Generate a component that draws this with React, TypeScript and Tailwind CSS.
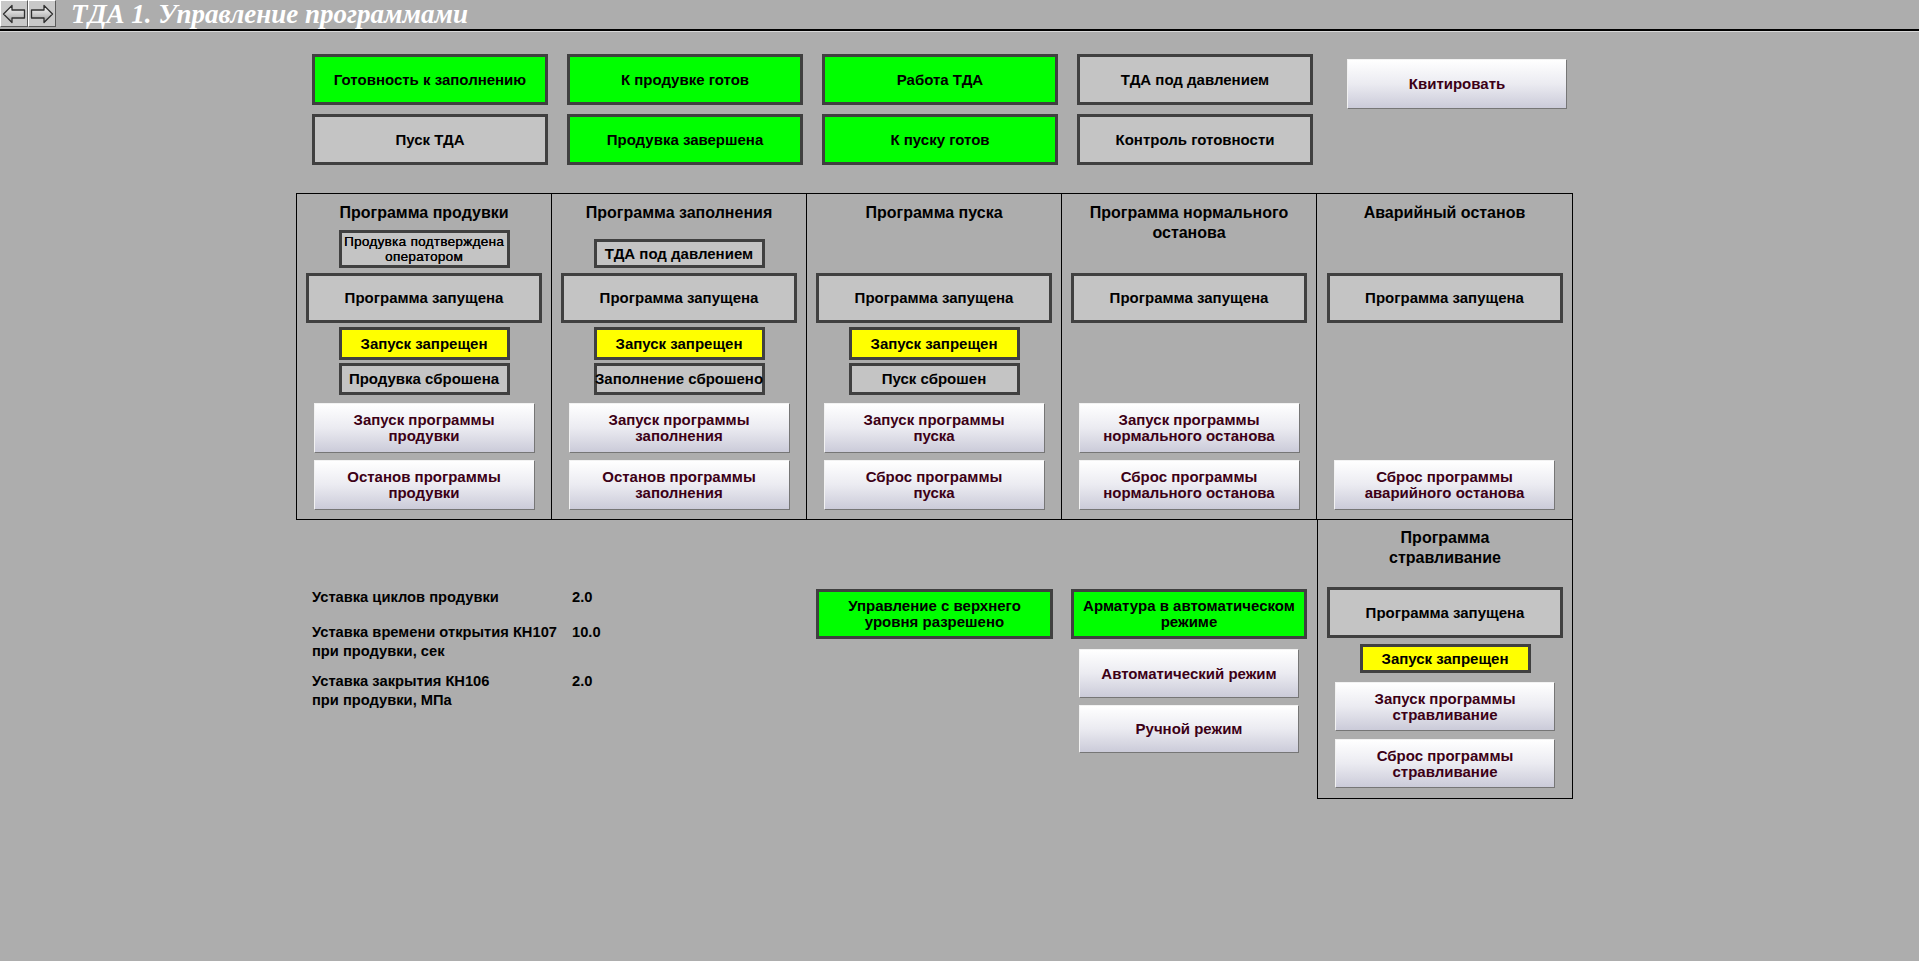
import type { ReactNode } from "react";

// Types
type Tone = "green" | "gray" | "yellow";

interface ProgramColumn {
  title: string[];
  note?: { text: string[]; small?: boolean; height: string };
  lamps?: { tone: Tone; text: string }[];
  buttons: (string[] | null)[];
}

const toneClass: Record<Tone, string> = {
  green: "bg-[#00ff00]",
  gray: "bg-[#c4c4c4]",
  yellow: "bg-[#ffff00]",
};

const topLamps: { tone: Tone; text: string }[] = [
  { tone: "green", text: "Готовность к заполнению" },
  { tone: "green", text: "К продувке готов" },
  { tone: "green", text: "Работа ТДА" },
  { tone: "gray", text: "ТДА под давлением" },
  { tone: "gray", text: "Пуск ТДА" },
  { tone: "green", text: "Продувка завершена" },
  { tone: "green", text: "К пуску готов" },
  { tone: "gray", text: "Контроль готовности" },
];

const columns: ProgramColumn[] = [
  {
    title: ["Программа продувки"],
    note: { text: ["Продувка подтверждена", "оператором"], small: true, height: "h-[38px]" },
    lamps: [
      { tone: "yellow", text: "Запуск запрещен" },
      { tone: "gray", text: "Продувка сброшена" },
    ],
    buttons: [
      ["Запуск программы", "продувки"],
      ["Останов программы", "продувки"],
    ],
  },
  {
    title: ["Программа заполнения"],
    note: { text: ["ТДА под давлением"], height: "h-[29px]" },
    lamps: [
      { tone: "yellow", text: "Запуск запрещен" },
      { tone: "gray", text: "Заполнение сброшено" },
    ],
    buttons: [
      ["Запуск программы", "заполнения"],
      ["Останов программы", "заполнения"],
    ],
  },
  {
    title: ["Программа пуска"],
    lamps: [
      { tone: "yellow", text: "Запуск запрещен" },
      { tone: "gray", text: "Пуск сброшен" },
    ],
    buttons: [
      ["Запуск программы", "пуска"],
      ["Сброс программы", "пуска"],
    ],
  },
  {
    title: ["Программа нормального", "останова"],
    buttons: [
      ["Запуск программы", "нормального останова"],
      ["Сброс программы", "нормального останова"],
    ],
  },
  {
    title: ["Аварийный останов"],
    buttons: [null, ["Сброс программы", "аварийного останова"]],
  },
];

const setpoints = [
  { label: ["Уставка циклов продувки"], value: "2.0", gap: "" },
  { label: ["Уставка времени открытия КН107", "при продувки, сек"], value: "10.0", gap: "mt-[16px]" },
  { label: ["Уставка закрытия КН106", "при продувки, МПа"], value: "2.0", gap: "mt-[11px]" },
];

function Lines({ lines }: { lines: string[] }) {
  return (
    <span>
      {lines.map((l, i) => (
        <span key={i} className="block">
          {l}
        </span>
      ))}
    </span>
  );
}

function Lamp({ tone, className = "", children }: { tone: Tone; className?: string; children: ReactNode }) {
  return (
    <div
      className={`flex items-center justify-center text-center whitespace-nowrap border-[3px] border-[#404040] text-black font-bold text-[15px] leading-[16px] ${toneClass[tone]} ${className}`}
    >
      {children}
    </div>
  );
}

function PanelButton({ className = "", children }: { className?: string; children: ReactNode }) {
  return (
    <button
      className={`flex items-center justify-center text-center whitespace-nowrap border border-t-[#f2f2f2] border-l-[#f2f2f2] border-r-[#767676] border-b-[#767676] bg-linear-to-b from-white via-[#ebebf1] to-[#cbcbd9] text-[#3c0016] font-bold text-[15px] leading-[16px] ${className}`}
    >
      {children}
    </button>
  );
}

function NavArrow({ dir }: { dir: "left" | "right" }) {
  return (
    <div className="w-[28px] h-[27px] bg-[#c8c8c8] border border-t-white border-l-white border-r-[#5a5a5a] border-b-[#5a5a5a] flex items-center justify-center">
      <svg width="24" height="20" viewBox="0 0 24 20" className={dir === "right" ? "-scale-x-100" : ""}>
        <defs>
          <linearGradient id={`ar-${dir}`} x1="0" y1="0" x2="0" y2="1">
            <stop offset="0" stopColor="#ffffff" />
            <stop offset="1" stopColor="#9a9a9a" />
          </linearGradient>
        </defs>
        <path
          d="M1.5 10 L10 1.5 L10 6 L22.5 6 L22.5 14 L10 14 L10 18.5 Z"
          fill={`url(#ar-${dir})`}
          stroke="#303030"
          strokeWidth="1.3"
          strokeLinejoin="round"
        />
      </svg>
    </div>
  );
}

function Column({ col, last }: { col: ProgramColumn; last: boolean }) {
  return (
    <div className={`w-[255px] flex flex-col items-center pb-[9px] ${last ? "" : "border-r border-black"}`}>
      <div className="h-[79px] w-full flex flex-col items-center justify-between pt-[9px] pb-[5px]">
        <div className="text-[16px] leading-[20px] font-bold text-center text-black">
          <Lines lines={col.title} />
        </div>
        {col.note && (
          <Lamp
            tone="gray"
            className={`w-[171px] ${col.note.height} ${col.note.small ? "!font-normal !text-[13.5px] !leading-[15px] tracking-[0.3px] [text-shadow:0.3px_0_0_#000]" : ""}`}
          >
            <Lines lines={col.note.text} />
          </Lamp>
        )}
      </div>
      <Lamp tone="gray" className="w-[236px] h-[50px]">
        Программа запущена
      </Lamp>
      <div className="h-[80px] pt-[4px] flex flex-col items-center gap-[3px]">
        {col.lamps?.map((l, i) => (
          <Lamp key={i} tone={l.tone} className={`w-[171px] ${i === 0 ? "h-[33px]" : "h-[32px]"}`}>
            {l.text}
          </Lamp>
        ))}
      </div>
      <div className="flex flex-col gap-[7px]">
        {col.buttons.map((b, i) =>
          b ? (
            <PanelButton key={i} className="w-[221px] h-[50px]">
              <Lines lines={b} />
            </PanelButton>
          ) : (
            <div key={i} className="w-[221px] h-[50px]" />
          )
        )}
      </div>
    </div>
  );
}

export default function App() {
  return (
    <div className="w-full min-h-screen bg-[#adadad] font-['Liberation_Sans',Arial,sans-serif] overflow-hidden">
      {/* Title bar */}
      <div className="h-[31px] border-b-[2px] border-black flex items-start">
        <NavArrow dir="left" />
        <NavArrow dir="right" />
        <div className="ml-[15px] font-['Liberation_Serif',serif] italic font-bold text-[27px] leading-[28px] text-white">
          ТДА 1. Управление программами
        </div>
      </div>
      <div className="h-px bg-[#d8d8d8]" />

      <div className="pl-[296px]">
        {/* Status lamps */}
        <div className="flex items-start pl-[16px] mt-[22px]">
          <div className="grid grid-cols-[repeat(4,236px)] gap-x-[19px] gap-y-[9px]">
            {topLamps.map((l) => (
              <Lamp key={l.text} tone={l.tone} className="h-[51px]">
                {l.text}
              </Lamp>
            ))}
          </div>
          <PanelButton className="ml-[34px] mt-[5px] w-[220px] h-[50px]">Квитировать</PanelButton>
        </div>

        {/* Program table */}
        <div className="mt-[28px] w-[1277px] flex border border-black">
          {columns.map((c, i) => (
            <Column key={i} col={c} last={i === columns.length - 1} />
          ))}
        </div>

        {/* Lower part */}
        <div className="w-[1277px] flex items-start">
          <div className="w-[520px] pl-[16px] pt-[68px] text-[14.7px] leading-[19px] font-bold text-black">
            {setpoints.map((s, i) => (
              <div key={i} className={`flex ${s.gap}`}>
                <div className="w-[260px]">
                  <Lines lines={s.label} />
                </div>
                <div>{s.value}</div>
              </div>
            ))}
          </div>
          <div className="w-[237px] pt-[69px]">
            <Lamp tone="green" className="h-[50px]">
              <Lines lines={["Управление с верхнего", "уровня разрешено"]} />
            </Lamp>
          </div>
          <div className="w-[236px] ml-[18px] pt-[69px] flex flex-col items-center">
            <Lamp tone="green" className="w-full h-[50px]">
              <Lines lines={["Арматура в автоматическом", "режиме"]} />
            </Lamp>
            <PanelButton className="mt-[10px] w-[220px] h-[49px]">Автоматический режим</PanelButton>
            <PanelButton className="mt-[7px] w-[220px] h-[48px]">Ручной режим</PanelButton>
          </div>
          <div className="ml-[10px] w-[256px] h-[279px] border-x border-b border-black flex flex-col items-center pt-[8px]">
            <div className="text-[16px] leading-[20px] font-bold text-center text-black">
              <Lines lines={["Программа", "стравливание"]} />
            </div>
            <Lamp tone="gray" className="mt-[19px] w-[236px] h-[51px]">
              Программа запущена
            </Lamp>
            <Lamp tone="yellow" className="mt-[6px] w-[171px] h-[29px]">
              Запуск запрещен
            </Lamp>
            <PanelButton className="mt-[9px] w-[220px] h-[49px]">
              <Lines lines={["Запуск программы", "стравливание"]} />
            </PanelButton>
            <PanelButton className="mt-[8px] w-[220px] h-[49px]">
              <Lines lines={["Сброс программы", "стравливание"]} />
            </PanelButton>
          </div>
        </div>
      </div>
    </div>
  );
}
